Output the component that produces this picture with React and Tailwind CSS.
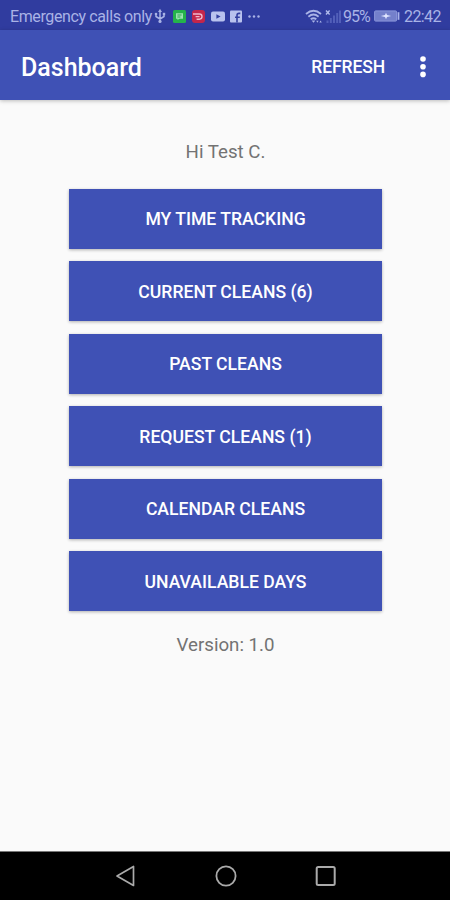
const actions = [
  'MY TIME TRACKING',
  'CURRENT CLEANS (6)',
  'PAST CLEANS',
  'REQUEST CLEANS (1)',
  'CALENDAR CLEANS',
  'UNAVAILABLE DAYS',
];

function UsbIcon() {
  return (
    <svg className="ml-[2px] h-4 w-3" viewBox="0 0 12 16" fill="none" stroke="currentColor" strokeWidth="1.5">
      <path d="M6 3v10M2 6v2.5l4 2.5 4-2.5V6" />
      <path d="M6 0.8 8 4H4z" fill="currentColor" stroke="none" />
      <circle cx="2" cy="6" r="1.3" fill="currentColor" stroke="none" />
      <path d="M8.8 4.8h2.4v2.4H8.8z" fill="currentColor" stroke="none" />
      <circle cx="6" cy="13.4" r="1.6" fill="currentColor" stroke="none" />
    </svg>
  );
}

function NotificationIcons() {
  return (
    <div className="ml-[7px] flex items-center gap-[6px]">
      <svg className="h-[13px] w-[13px]" viewBox="0 0 13 13">
        <rect width="13" height="13" rx="1.5" fill="#25b34b" />
        <path d="M3 3.3h7v5.4H6.5L4.5 10V8.7H3z" fill="#9be3b0" />
        <path d="M4.4 5h4.2M4.4 7h3" stroke="#25a34b" strokeWidth="0.9" />
      </svg>
      <svg className="h-[13px] w-[13px]" viewBox="0 0 13 13">
        <rect width="13" height="13" rx="3" fill="#c3264b" />
        <path d="M1 4h6.4a2.6 2.6 0 0 1 0 5.2H4.6M3.6 6.6h4" fill="none" stroke="#efb7cb" strokeWidth="1.4" />
      </svg>
      <svg className="h-[11px] w-[14px]" viewBox="0 0 14 11">
        <rect y="0.5" width="14" height="10" rx="2" fill="#b9c2ee" />
        <path d="m5.4 3.2 4.2 2.3-4.2 2.3z" fill="#3440a0" />
      </svg>
      <svg className="-ml-px h-[13px] w-[12px]" viewBox="0 0 12 13">
        <rect y="0.5" width="12" height="12" rx="1" fill="#b9c2ee" />
        <path d="M7 12.5V5.4q0-2 2-2h1.3M5 7.3h4.8" fill="none" stroke="#3440a0" strokeWidth="1.6" />
      </svg>
      <svg className="h-[3px] w-3" viewBox="0 0 12 3" fill="#a9b3e6">
        <circle cx="1.5" cy="1.5" r="1.2" />
        <circle cx="6" cy="1.5" r="1.2" />
        <circle cx="10.5" cy="1.5" r="1.2" />
      </svg>
    </div>
  );
}

function WifiIcon() {
  return (
    <svg className="h-[15px] w-[18px]" viewBox="0 0 18 15" fill="none" stroke="currentColor" strokeWidth="1.8">
      <path d="M1 5Q8.5-1.4 16 5M3.4 7.7q5.1-4.3 10.2 0M5.7 10.3q2.8-2.2 5.6 0" />
      <path d="M6.6 11.6h3.8l-1.9 2.2zM11.2 11.8h2.4l-1.2 2zM14.4 13.6h2.4l-1.2-2z" fill="currentColor" stroke="none" />
    </svg>
  );
}

function SignalIcon() {
  return (
    <svg className="ml-[2px] h-[15px] w-4" viewBox="0 0 16 15">
      <path d="m1 1.5 3.6 4M4.6 1.5 1 5.5" stroke="#b0baeb" strokeWidth="1.4" />
      <path d="M2.5 14v-2.5M5.8 14V9M9 14V6.5M12.2 14V4M15 14V1.5" stroke="#525fb9" strokeWidth="2" />
    </svg>
  );
}

function BatteryIcon() {
  return (
    <svg className="ml-[4px] h-3 w-[26px]" viewBox="0 0 26 12">
      <rect x="0.6" y="0.9" width="22" height="10.2" rx="1" fill="#7480cb" stroke="#8a96da" />
      <path d="M24.5 2.2v7.6" stroke="#a8b2e8" strokeWidth="1.8" />
      <path d="m6.8 6 4.2-1 1-2.2 1 2.2 4.2 1-4.2 1-1 2.2L11 7z" fill="#e0e5ff" />
    </svg>
  );
}

function StatusBar() {
  return (
    <div className="flex h-[30px] items-center bg-[#303c9f] pt-[2px] pl-[10px] text-[#a9b3e6]">
      <span className="w-[142px] pt-px text-[16px] leading-none tracking-[-0.38px] whitespace-nowrap">Emergency calls only</span>
      <UsbIcon />
      <NotificationIcons />
      <div className="ml-auto flex items-center pr-[9px]">
        <WifiIcon />
        <SignalIcon />
        <span className="ml-[2px] w-[27px] pt-px text-[16px] leading-none tracking-[-1px]">95%</span>
        <BatteryIcon />
        <span className="ml-[4px] w-[37px] pt-px text-[16px] leading-none tracking-[-0.6px]">22:42</span>
      </div>
    </div>
  );
}

export default function App() {
  return (
    <div className="flex h-[900px] w-[450px] flex-col overflow-hidden bg-[#fafafa] font-['Roboto',sans-serif]">
      <StatusBar />
      <header className="flex h-[70px] shrink-0 items-center bg-[#3f51b5] pt-[4px] pl-[21px] text-white shadow-[0_1px_4px_rgba(0,0,0,0.25)]">
        <h1 className="text-[25px] leading-none font-medium">Dashboard</h1>
        <button className="mt-px ml-auto text-[17.5px] leading-none font-medium tracking-[-0.1px]">REFRESH</button>
        <button className="mr-[23px] ml-[34px]" aria-label="More options">
          <svg className="mb-px h-[22px] w-2" viewBox="0 0 8 22" fill="currentColor">
            <circle cx="4" cy="3" r="2.8" />
            <circle cx="4" cy="10.7" r="2.8" />
            <circle cx="4" cy="18.4" r="2.8" />
          </svg>
        </button>
      </header>
      <main className="flex flex-1 flex-col items-center">
        <p className="mt-[40px] pl-px text-[18.7px] leading-6 text-[#737373]">Hi Test C.</p>
        <div className="mt-[24.5px] ml-px flex flex-col gap-[12.5px]">
          {actions.map((label) => (
            <button
              key={label}
              className="h-[60px] w-[312.5px] bg-[#3f51b5] pt-[2px] text-[17.6px] font-medium text-white shadow-[0_1px_3px_rgba(0,0,0,0.3)]"
            >
              {label}
            </button>
          ))}
        </div>
        <p className="mt-[22px] pl-px text-[18.7px] leading-6 text-[#737373]">Version: 1.0</p>
      </main>
      <nav className="flex h-[49px] shrink-0 items-center justify-center gap-[78px] border-t border-[#777] bg-black pl-px text-[#aaa]">
        <svg className="h-[22px] w-[22px]" viewBox="0 0 22 22" fill="none" stroke="currentColor" strokeWidth="1.7" strokeLinejoin="round">
          <path d="M2 11 18.5 1.5v19z" />
        </svg>
        <svg className="h-[22px] w-[22px]" viewBox="0 0 22 22" fill="none" stroke="currentColor" strokeWidth="1.8">
          <circle cx="11" cy="11" r="9.6" />
        </svg>
        <svg className="h-[22px] w-[22px]" viewBox="0 0 22 22" fill="none" stroke="currentColor" strokeWidth="2">
          <rect x="1.7" y="2" width="18" height="18" rx="1.5" />
        </svg>
      </nav>
    </div>
  );
}
